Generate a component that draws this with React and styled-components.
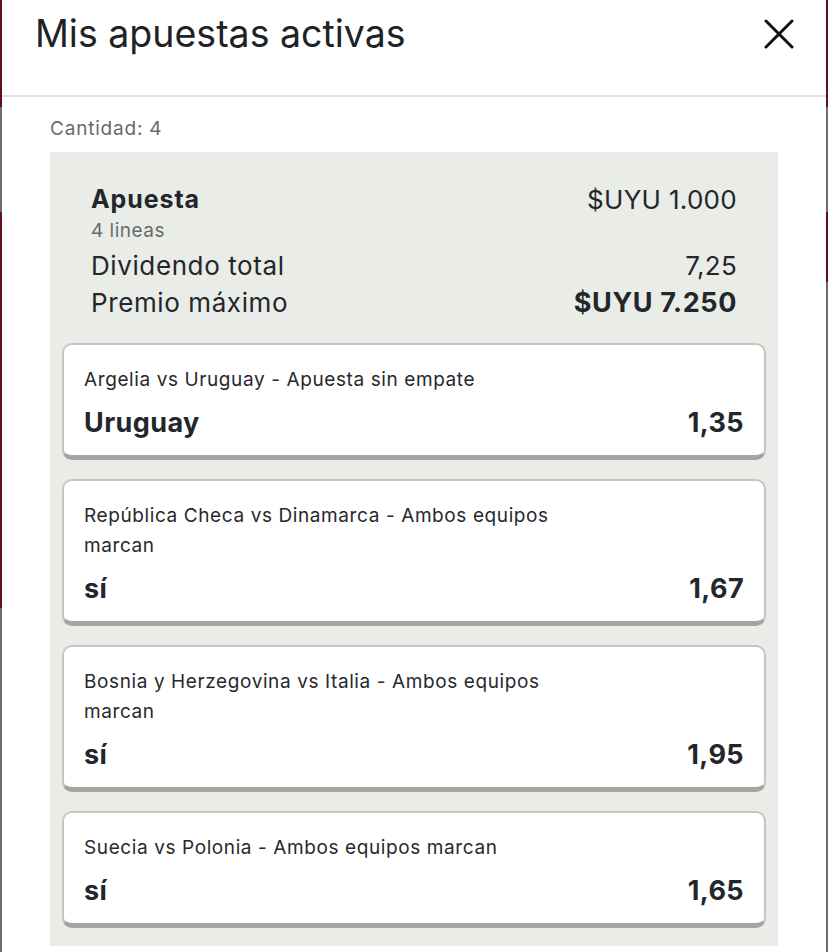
import React from 'react'
import styled, { createGlobalStyle } from 'styled-components'

const GlobalStyle = createGlobalStyle`
    html, body {
        margin: 0;
        padding: 0;
        background: #6e6e6e;
    }
    body {
        font-family: Inter, "Noto Sans", "Liberation Sans", sans-serif;
        color: #23262b;
        -webkit-font-smoothing: antialiased;
    }
`

const bets = [
    { id: 1, title: 'Argelia vs Uruguay - Apuesta sin empate', pick: 'Uruguay', odds: '1,35' },
    { id: 2, title: 'República Checa vs Dinamarca - Ambos equipos marcan', pick: 'sí', odds: '1,67' },
    { id: 3, title: 'Bosnia y Herzegovina vs Italia - Ambos equipos marcan', pick: 'sí', odds: '1,95' },
    { id: 4, title: 'Suecia vs Polonia - Ambos equipos marcan', pick: 'sí', odds: '1,65' },
]

const CloseIcon = () => (
    <svg width="30" height="30" viewBox="0 0 30 30">
        <path d="M2 2 L28 28 M28 2 L2 28" stroke="#111" strokeWidth="3" strokeLinecap="round" />
    </svg>
)

const App = () => {
    return (
        <>
            <GlobalStyle />
            <Backdrop>
                <Edge $redEnd={608} />
                <Modal>
                    <Header>
                        <Title>Mis apuestas activas</Title>
                        <CloseButton aria-label="Cerrar"><CloseIcon /></CloseButton>
                    </Header>
                    <Body>
                        <Count>Cantidad: 4</Count>
                        <Panel>
                            <Summary>
                                <SummaryRow>
                                    <Label $bold>Apuesta</Label>
                                    <Value>$UYU 1.000</Value>
                                </SummaryRow>
                                <Lines>4 lineas</Lines>
                                <SummaryRow $tall>
                                    <Label>Dividendo total</Label>
                                    <Value>7,25</Value>
                                </SummaryRow>
                                <SummaryRow $tall>
                                    <Label>Premio máximo</Label>
                                    <Value $bold>$UYU 7.250</Value>
                                </SummaryRow>
                            </Summary>
                            <CardList>
                                {bets.map((bet) => (
                                    <BetCard key={bet.id}>
                                        <BetTitle>{bet.title}</BetTitle>
                                        <BetRow>
                                            <Pick>{bet.pick}</Pick>
                                            <Pick>{bet.odds}</Pick>
                                        </BetRow>
                                    </BetCard>
                                ))}
                            </CardList>
                        </Panel>
                    </Body>
                </Modal>
                <Edge $redEnd={282} />
            </Backdrop>
        </>
    )
}

const Backdrop = styled.div`
    display: flex;
    min-height: 952px;
`

const Edge = styled.div`
    width: 2px;
    flex-shrink: 0;
    background: linear-gradient(
        to bottom,
        #5a1119 0 107px,
        #6e6e6e 107px 212px,
        #5a1119 212px ${(p) => p.$redEnd}px,
        #6e6e6e ${(p) => p.$redEnd}px
    );
`

const Modal = styled.div`
    flex: 1;
    background: #fff;
    display: flex;
    flex-direction: column;
`

const Header = styled.div`
    height: 97px;
    border-bottom: 2px solid #e2e2e2;
    display: flex;
    align-items: flex-start;
    justify-content: space-between;
    padding: 0 32px 0 33px;
    box-sizing: border-box;
`

const Title = styled.h1`
    margin: 11px 0 0;
    font-size: 37.5px;
    font-weight: 400;
    line-height: 46px;
    color: #202225;
`

const CloseButton = styled.button`
    margin-top: 19px;
    padding: 0;
    border: none;
    background: none;
    display: flex;
    cursor: pointer;
`

const Body = styled.div`
    padding: 21px 48px 0;
`

const Count = styled.div`
    font-size: 19px;
    line-height: 22px;
    letter-spacing: 0.8px;
    color: #6a6a6a;
    margin-bottom: 12px;
`

const Panel = styled.div`
    background: #e9ece7;
    padding: 31px 12px 18px;
`

const Summary = styled.div`
    padding: 0 29px;
    margin-bottom: 22px;
`

const SummaryRow = styled.div`
    display: flex;
    justify-content: space-between;
    align-items: center;
    height: ${(p) => (p.$tall ? '37px' : '32px')};
`

const Label = styled.span`
    font-size: ${(p) => (p.$bold ? '25px' : '26px')};
    font-weight: ${(p) => (p.$bold ? 700 : 400)};
    letter-spacing: ${(p) => (p.$bold ? '0.9px' : '0.6px')};
`

const Value = styled.span`
    font-size: ${(p) => (p.$bold ? '27px' : '26px')};
    font-weight: ${(p) => (p.$bold ? 700 : 400)};
    letter-spacing: ${(p) => (p.$bold ? '0.6px' : '0.3px')};
`

const Lines = styled.div`
    font-size: 19px;
    line-height: 32px;
    letter-spacing: 0.5px;
    color: #6a6a6a;
`

const CardList = styled.div`
    display: flex;
    flex-direction: column;
    gap: 19px;
`

const BetCard = styled.div`
    background: #fff;
    border: 2px solid #c4c6c3;
    border-bottom: 5px solid #a3a5a2;
    border-radius: 10px;
    padding: 20px 20px 15px;
`

const BetTitle = styled.div`
    font-size: 19px;
    line-height: 30px;
    letter-spacing: 0.6px;
    max-width: 495px;
    color: #26292d;
`

const BetRow = styled.div`
    display: flex;
    justify-content: space-between;
    align-items: center;
    margin-top: 9px;
    height: 36px;
`

const Pick = styled.span`
    font-size: 27px;
    font-weight: 700;
    letter-spacing: 0.4px;
    color: #23262b;
`

export default App
